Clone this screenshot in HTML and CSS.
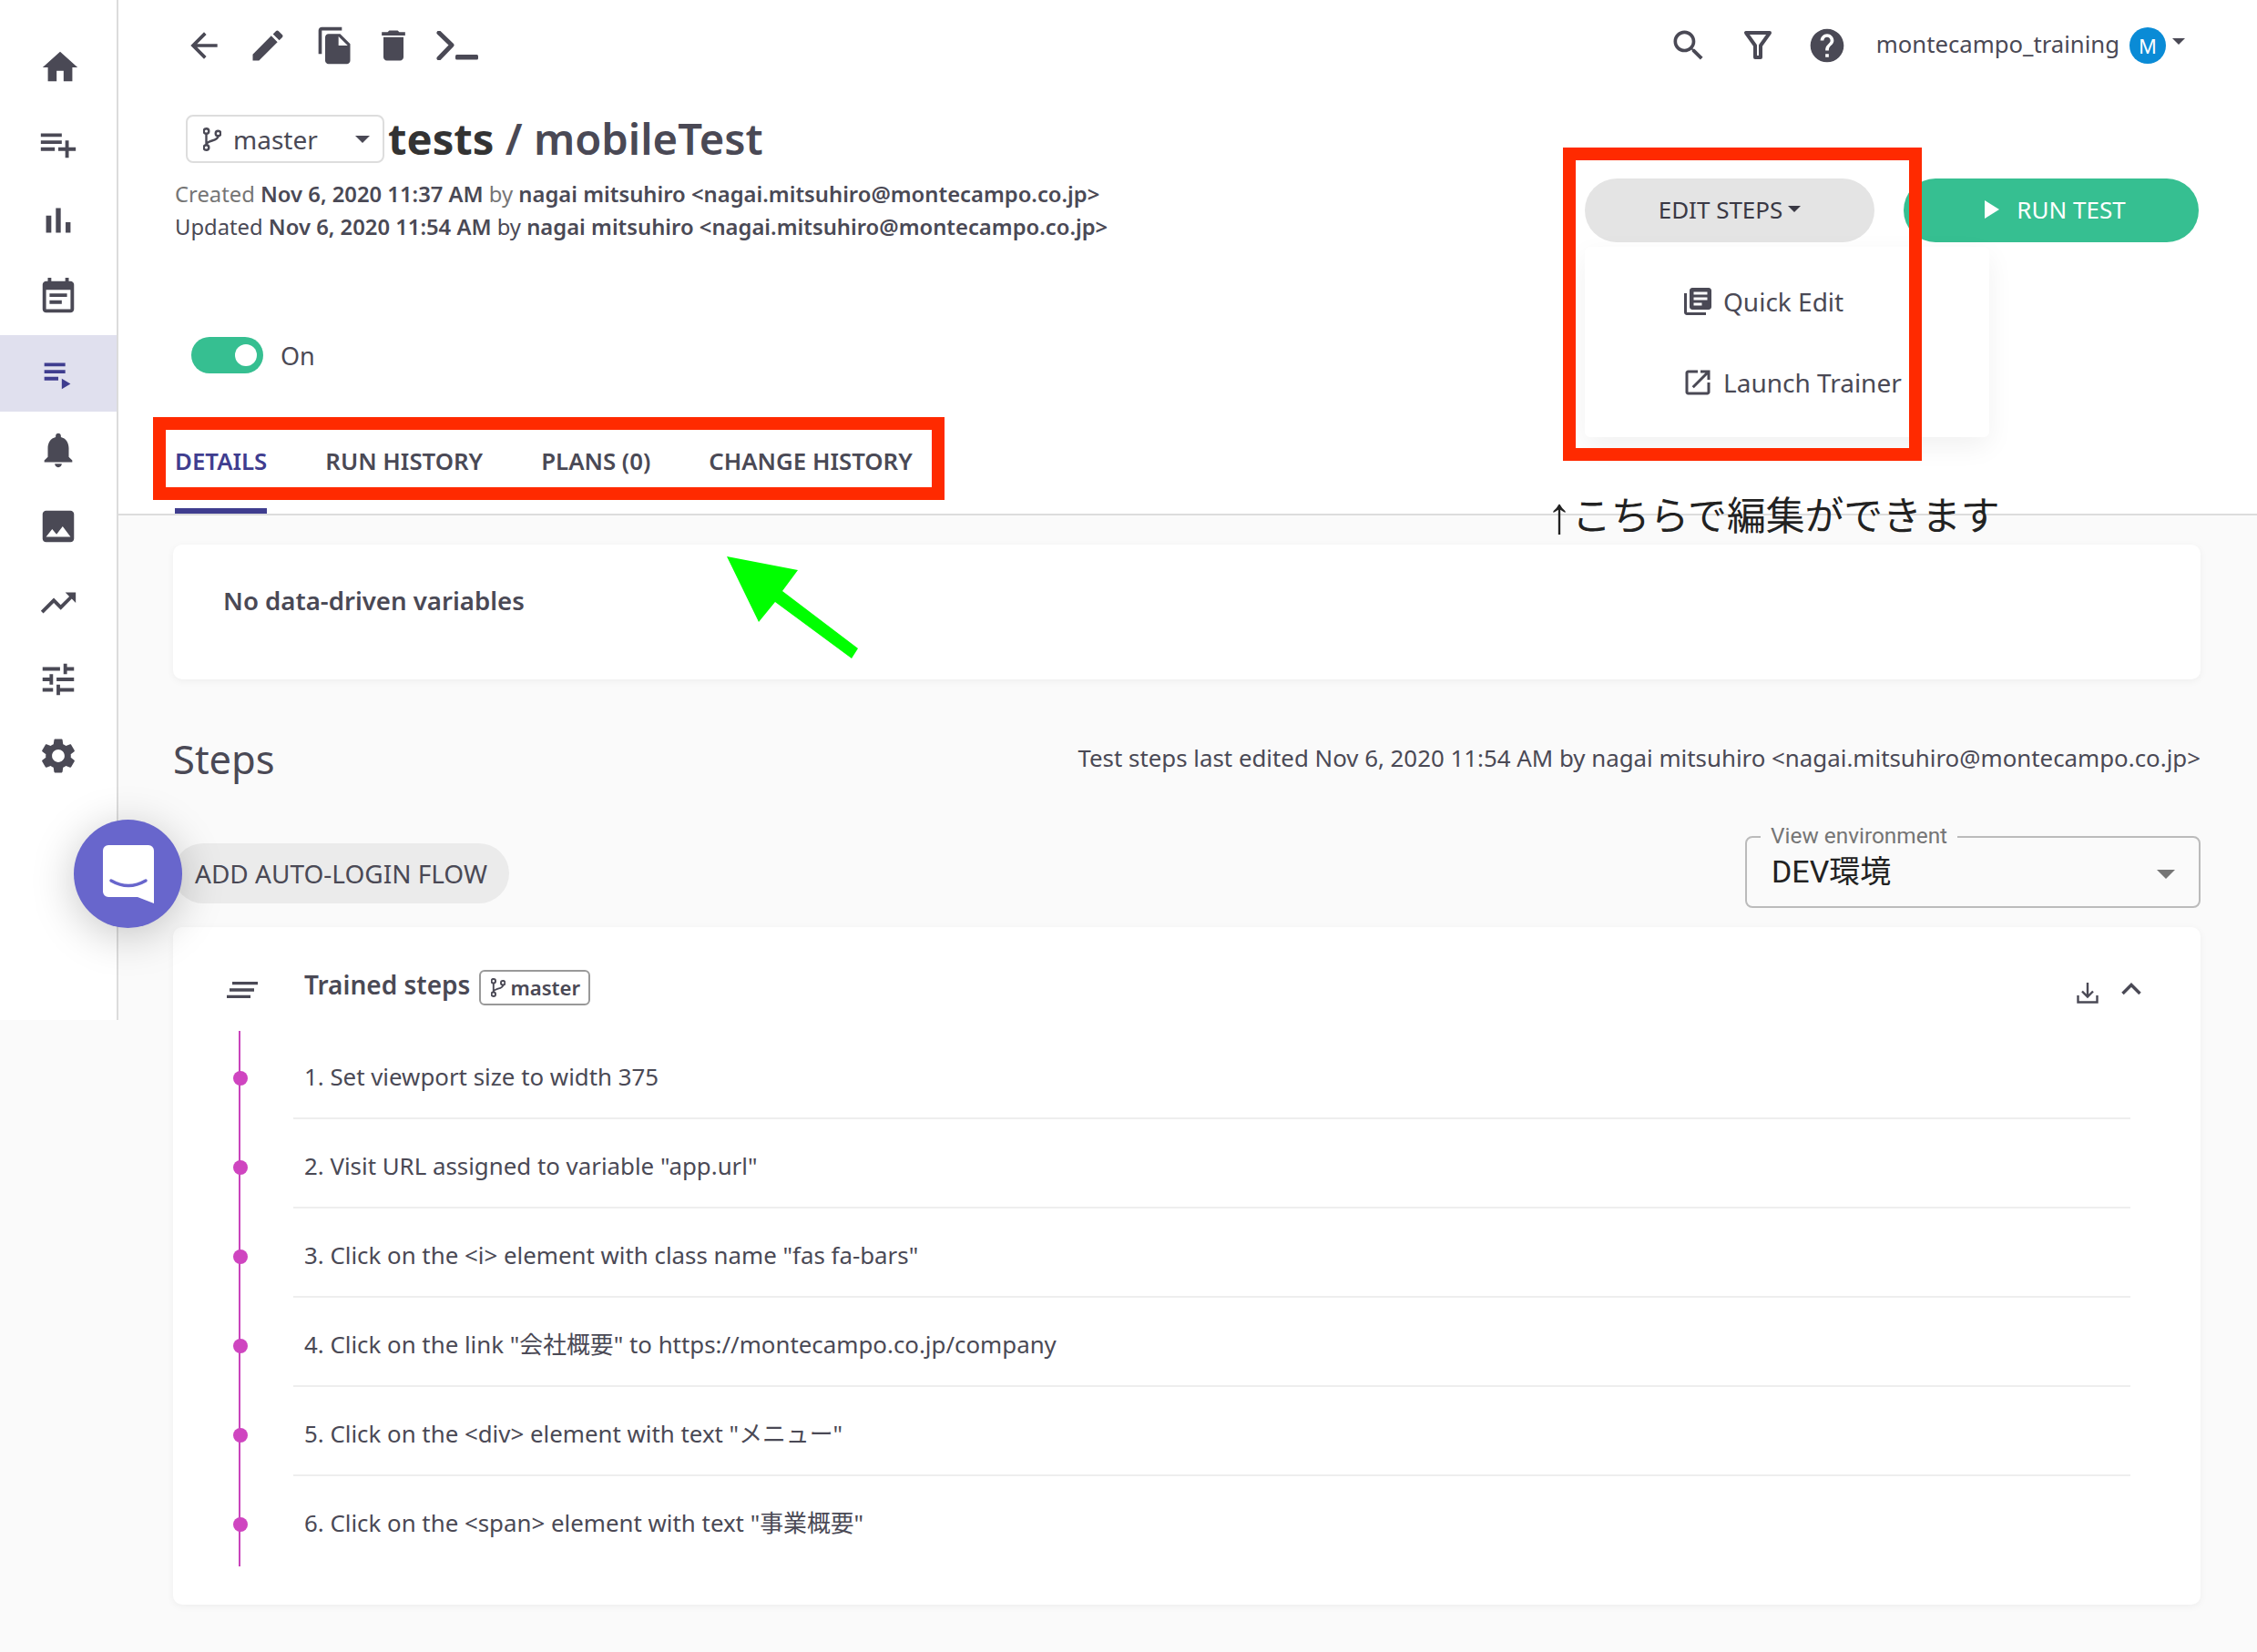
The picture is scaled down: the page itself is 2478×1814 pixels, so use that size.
FILE: index.html
```html
<!DOCTYPE html>
<html lang="en">
<head>
<meta charset="utf-8">
<title>tests / mobileTest</title>
<link rel="stylesheet" href="styles.css">
</head>
<body>
<div class="app">
  <nav class="sidebar">
    <a class="nav-item"><svg class="ico46 nudge" viewBox="0 0 24 24"><path d="M10 20v-6h4v6h5v-8h3L12 3 2 12h3v8z"/></svg></a>
    <a class="nav-item"><svg class="ico46" viewBox="0 0 24 24"><path d="M14 10H2v2h12v-2zm0-4H2v2h12V6zm4 8v-4h-2v4h-4v2h4v4h2v-4h4v-2h-4zM2 16h8v-2H2v2z"/></svg></a>
    <a class="nav-item"><svg class="ico46" viewBox="0 0 24 24"><path d="M5 9.2h3V19H5zM10.6 5h2.8v14h-2.8zm5.6 8H19v6h-2.8z"/></svg></a>
    <a class="nav-item"><svg class="ico46" viewBox="0 0 24 24"><path d="M17 10H7v2h10v-2zm2-7h-1V1h-2v2H8V1H6v2H5c-1.11 0-1.99.9-1.99 2L3 19c0 1.1.89 2 2 2h14c1.1 0 2-.9 2-2V5c0-1.1-.9-2-2-2zm0 16H5V8h14v11zm-5-5H7v2h7v-2z"/></svg></a>
    <a class="nav-item active"><svg class="ico46" viewBox="0 0 24 24"><path d="M4 6h12v2H4zm0 4h12v2H4zm0 4h8v2H4zm10 1v6l5-3z"/></svg></a>
    <a class="nav-item"><svg class="ico46" viewBox="0 0 24 24"><path d="M12 22c1.1 0 2-.9 2-2h-4c0 1.1.89 2 2 2zm6-6v-5c0-3.07-1.64-5.64-4.5-6.32V4c0-.83-.67-1.5-1.5-1.5s-1.5.67-1.5 1.5v.68C7.63 5.36 6 7.92 6 11v5l-2 2v1h16v-1l-2-2z"/></svg></a>
    <a class="nav-item"><svg class="ico46" viewBox="0 0 24 24"><path d="M21 19V5c0-1.1-.9-2-2-2H5c-1.1 0-2 .9-2 2v14c0 1.1.9 2 2 2h14c1.1 0 2-.9 2-2zM8.5 13.5l2.5 3.01L14.5 12l4.5 6H5l3.5-4.5z"/></svg></a>
    <a class="nav-item"><svg class="ico46" viewBox="0 0 24 24"><path d="M16 6l2.29 2.29-4.88 4.88-4-4L2 16.59 3.41 18l6-6 4 4 6.3-6.29L22 12V6z"/></svg></a>
    <a class="nav-item"><svg class="ico46" viewBox="0 0 24 24"><path d="M3 17v2h6v-2H3zM3 5v2h10V5H3zm10 16v-2h8v-2h-8v-2h-2v6h2zM7 9v2H3v2h4v2h2V9H7zm14 4v-2H11v2h10zm-6-4h2V7h4V5h-4V3h-2v6z"/></svg></a>
    <a class="nav-item"><svg class="ico46" viewBox="0 0 24 24"><path d="M19.14 12.94c.04-.3.06-.61.06-.94 0-.32-.02-.64-.07-.94l2.03-1.58c.18-.14.23-.41.12-.61l-1.92-3.32c-.12-.22-.37-.29-.59-.22l-2.39.96c-.5-.38-1.03-.7-1.62-.94l-.36-2.54c-.04-.24-.24-.41-.48-.41h-3.84c-.24 0-.43.17-.47.41l-.36 2.54c-.59.24-1.13.57-1.62.94l-2.39-.96c-.22-.08-.47 0-.59.22L2.74 8.87c-.12.21-.08.47.12.61l2.03 1.58c-.05.3-.09.63-.09.94s.02.64.07.94l-2.03 1.58c-.18.14-.23.41-.12.61l1.92 3.32c.12.22.37.29.59.22l2.39-.96c.5.38 1.03.7 1.62.94l.36 2.54c.05.24.24.41.48.41h3.84c.24 0 .44-.17.47-.41l.36-2.54c.59-.24 1.13-.56 1.62-.94l2.39.96c.22.08.47 0 .59-.22l1.92-3.32c.12-.22.07-.47-.12-.61l-2.01-1.58zM12 15.6c-1.98 0-3.6-1.62-3.6-3.6s1.62-3.6 3.6-3.6 3.6 1.62 3.6 3.6-1.62 3.6-3.6 3.6z"/></svg></a>
  </nav>

  <main class="main">
    <header class="header">
      <div class="topbar">
        <div class="toolbar">
          <svg class="ico44" viewBox="0 0 24 24"><path d="M20 11H7.83l5.59-5.59L12 4l-8 8 8 8 1.41-1.41L7.83 13H20v-2z"/></svg>
          <svg class="ico44" viewBox="0 0 24 24"><path d="M3 17.25V21h3.75L17.81 9.94l-3.75-3.75L3 17.25zM20.71 7.04c.39-.39.39-1.02 0-1.41l-2.34-2.34c-.39-.39-1.02-.39-1.41 0l-1.83 1.83 3.75 3.75 1.83-1.83z"/></svg>
          <svg class="ico44 copy" viewBox="0 0 24 24"><path d="M16 1H4c-1.1 0-2 .9-2 2v14h2V3h12V1zm-1 4l6 6v10c0 1.1-.9 2-2 2H7.99C6.89 23 6 22.1 6 21l.01-14c0-1.1.89-2 1.99-2h7zm-1 7h5.5L14 6.5V12z"/></svg>
          <svg class="ico44 trash" viewBox="0 0 24 24"><path d="M6 19c0 1.1.9 2 2 2h8c1.1 0 2-.9 2-2V7H6v12zM19 4h-3.5l-1-1h-5l-1 1H5v2h14V4z"/></svg>
          <svg class="term" viewBox="0 0 46 32"><path d="M3 2l14 13.5L3 30" fill="none" stroke="#4a4955" stroke-width="5" stroke-linecap="round" stroke-linejoin="round"/><rect x="21" y="26" width="25" height="5.5" rx="1.5"/></svg>
        </div>
        <div class="userbar">
          <svg class="ico44" viewBox="0 0 24 24"><path d="M15.5 14h-.79l-.28-.27C15.41 12.59 16 11.11 16 9.5 16 5.91 13.09 3 9.5 3S3 5.91 3 9.5 5.91 16 9.5 16c1.61 0 3.09-.59 4.23-1.57l.27.28v.79l5 4.99L20.49 19l-4.99-5zm-6 0C7.01 14 5 11.99 5 9.5S7.01 5 9.5 5 14 7.01 14 9.5 11.99 14 9.5 14z"/></svg>
          <svg class="ico44" viewBox="0 0 44 44"><path d="M9 8h26L25 22v13h-6V22z" fill="none" stroke="#4a4955" stroke-width="4" stroke-linejoin="round"/></svg>
          <svg class="ico44" viewBox="0 0 24 24"><path d="M12 2C6.48 2 2 6.48 2 12s4.48 10 10 10 10-4.48 10-10S17.52 2 12 2zm1 17h-2v-2h2v2zm2.07-7.75l-.9.92C13.45 12.9 13 13.5 13 15h-2v-.5c0-1.1.45-2.1 1.17-2.83l1.24-1.26c.37-.36.59-.86.59-1.41 0-1.1-.9-2-2-2s-2 .9-2 2H8c0-2.21 1.79-4 4-4s4 1.79 4 4c0 .88-.36 1.68-.93 2.25z"/></svg>
          <span class="username">montecampo_training</span>
          <span class="avatar">M</span>
          <span class="caret user-caret"></span>
        </div>
      </div>

      <div class="head-body">
        <div class="head-left">
          <div class="title-row">
            <div class="branch-select">
              <svg class="branch" viewBox="0 0 20 26"><circle cx="3.500" cy="4" r="2.800"/><circle cx="3.500" cy="22" r="2.800"/><circle cx="16.500" cy="6.500" r="2.800"/><path d="M3.500 7v12M16.500 9.500c0 6-13 4-13 9.500"/></svg>
              <span class="branch-name">master</span>
              <span class="caret caret-branch"></span>
            </div>
            <h1 class="title"><span class="title-dark">tests</span> / mobileTest</h1>
          </div>
          <div class="meta">
            <p class="meta-line"><span class="muted">Created</span> <b>Nov 6, 2020 11:37 AM</b> <span class="muted">by</span> <b>nagai mitsuhiro &lt;nagai.mitsuhiro@montecampo.co.jp&gt;</b></p>
            <p class="meta-line">Updated <b>Nov 6, 2020 11:54 AM</b> by <b>nagai mitsuhiro &lt;nagai.mitsuhiro@montecampo.co.jp&gt;</b></p>
          </div>
          <div class="toggle-row">
            <span class="toggle"><span class="knob"></span></span>
            <span class="toggle-label">On</span>
          </div>
          <div class="tabs">
            <a class="tab active">DETAILS</a>
            <a class="tab">RUN HISTORY</a>
            <a class="tab">PLANS (0)</a>
            <a class="tab">CHANGE HISTORY</a>
          </div>
        </div>
        <div class="actions">
          <div class="edit-wrap">
            <button class="btn btn-edit">EDIT STEPS<span class="caret caret-edit"></span></button>
            <div class="menu">
              <div class="menu-item"><svg class="ico36" viewBox="0 0 24 24"><path d="M4 6H2v14c0 1.1.9 2 2 2h14v-2H4V6zm16-4H8c-1.1 0-2 .9-2 2v12c0 1.1.9 2 2 2h12c1.1 0 2-.9 2-2V4c0-1.1-.9-2-2-2zm-1 9H9V9h10v2zm-4 4H9v-2h6v2zm4-8H9V5h10v2z"/></svg>Quick Edit</div>
              <div class="menu-item"><svg class="ico36" viewBox="0 0 24 24"><path d="M19 19H5V5h7V3H5c-1.11 0-2 .9-2 2v14c0 1.1.89 2 2 2h14c1.1 0 2-.9 2-2v-7h-2v7zM14 3v2h3.59l-9.83 9.83 1.41 1.41L19 6.41V10h2V3h-7z"/></svg>Launch Trainer</div>
            </div>
          </div>
          <button class="btn btn-run"><svg class="play" viewBox="0 0 18 24"><path d="M1 2l16 10L1 22z"/></svg>RUN TEST</button>
        </div>
      </div>
    </header>

    <section class="content">
      <div class="card card-vars">No data-driven variables</div>

      <div class="steps-head">
        <h2 class="steps-title">Steps</h2>
        <p class="steps-edited">Test steps last edited Nov 6, 2020 11:54 AM by nagai mitsuhiro &lt;nagai.mitsuhiro@montecampo.co.jp&gt;</p>
      </div>

      <div class="steps-tools">
        <button class="btn-login">ADD AUTO-LOGIN FLOW</button>
        <div class="env-select">
          <span class="env-label">View environment</span>
          <span class="env-value">DEV環境</span>
          <span class="env-caret"></span>
        </div>
      </div>

      <div class="card card-steps">
        <div class="steps-card-head">
          <svg class="lines" viewBox="0 0 34 18"><path d="M6 1.500h28M3 9h27M0 16.500h26" fill="none" stroke="#4a4955" stroke-width="3.500"/></svg>
          <span class="trained">Trained steps</span>
          <span class="chip"><svg class="branch small" viewBox="0 0 20 26"><circle cx="3.500" cy="4" r="2.800"/><circle cx="3.500" cy="22" r="2.800"/><circle cx="16.500" cy="6.500" r="2.800"/><path d="M3.500 7v12M16.500 9.500c0 6-13 4-13 9.500"/></svg>master</span>
          <span class="card-tools">
            <svg class="dl" viewBox="0 0 24 24"><path d="M12 1v15M6 10.500l6 6 6-6M1.500 15v7.500h21V15" fill="none" stroke="#4a4955" stroke-width="2.400"/></svg>
            <svg class="chev" viewBox="0 0 22 14"><path d="M1.500 12L11 2.500 20.500 12" fill="none" stroke="#4a4955" stroke-width="3.500"/></svg>
          </span>
        </div>
        <ol class="step-list">
          <li class="step">1. Set viewport size to width 375</li>
          <li class="step">2. Visit URL assigned to variable "app.url"</li>
          <li class="step">3. Click on the &lt;i&gt; element with class name "fas fa-bars"</li>
          <li class="step">4. Click on the link "会社概要" to https://montecampo.co.jp/company</li>
          <li class="step">5. Click on the &lt;div&gt; element with text "メニュー"</li>
          <li class="step">6. Click on the &lt;span&gt; element with text "事業概要"</li>
        </ol>
      </div>
    </section>
  </main>
</div>

<div class="mark mark-tabs"></div>
<div class="mark mark-edit"></div>
<p class="note"><span class="note-arrow">↑</span>こちらで編集ができます</p>
<svg class="green-arrow" viewBox="0 0 160 125"><polygon points="8,1 86,16 69,39 152,102 145,113 61,51 43,73"/></svg>
<div class="chat">
  <svg class="chat-icon" viewBox="0 0 56 64"><path d="M6 0h44a6 6 0 0 1 6 6v58l-18-7H6a6 6 0 0 1-6-6V6a6 6 0 0 1 6-6z" fill="#fff"/><path d="M9 39q19 11 38 0" fill="none" stroke="#6866cc" stroke-width="3.500" stroke-linecap="round"/></svg>
</div>
</body>
</html>
```
FILE: styles.css
```css
* { box-sizing: border-box; }
html, body { margin: 0; padding: 0; }
body {
  position: relative;
  width: 2478px;
  height: 1814px;
  overflow: hidden;
  background: #fafafa;
  color: #4a4955;
  font-family: "Noto Sans", "Noto Sans CJK JP", sans-serif;
  font-size: 26px;
}
svg { fill: #4a4955; flex: none; display: block; }
p, h1, h2, ol { margin: 0; padding: 0; }
button { font-family: inherit; border: 0; color: inherit; padding: 0; }

.app { display: flex; align-items: flex-start; }

/* sidebar */
.sidebar {
  flex: none;
  width: 130px;
  height: 1120px;
  padding-top: 32px;
  background: #fff;
  border-right: 2px solid #dcdcdc;
  position: relative;
  z-index: 1;
}
.nav-item { display: flex; align-items: center; justify-content: center; height: 84px; }
.nav-item.active { background: #e0e0ee; }
.nav-item.active svg { fill: #3f3d8f; }
.nudge { margin-left: 3px; }
.ico46 { width: 46px; height: 46px; }
.ico44 { width: 44px; height: 44px; }
.ico36 { width: 36px; height: 36px; }

/* header */
.main { flex: 1; min-width: 0; }
.header { height: 566px; background: #fff; border-bottom: 2px solid #dcdcdc; }
.topbar { display: flex; justify-content: space-between; align-items: center; height: 98px; padding: 2px 79px 0 72px; }
.toolbar { display: flex; align-items: center; gap: 26px; }
.copy { margin-left: 4px; }
.trash { margin-left: -6px; }
.term { width: 46px; height: 32px; margin-left: -1px; }
.userbar { display: flex; align-items: center; gap: 32px; }
.username { font-size: 25.7px; margin: -3px -21px 0 0; }
.avatar {
  width: 40px; height: 40px; border-radius: 50%;
  background: #0a8bd6; color: #fff; font-size: 22px;
  display: flex; align-items: center; justify-content: center;
}
.caret { width: 0; height: 0; border: 7px solid transparent; border-top-color: #4a4955; border-bottom-width: 0; }
.user-caret { margin: -10px 0 0 -25px; }
.caret-branch { border-width: 8px 8px 0; }

.head-body { display: flex; justify-content: space-between; }
.head-left { width: 1100px; position: relative; }
.title-row { display: flex; align-items: center; margin: 28px 0 0 74px; height: 53px; }
.branch-select {
  width: 218px; height: 53px;
  border: 2px solid #ddd; border-radius: 8px;
  display: flex; align-items: center; padding: 0 14px 0 17px;
}
.branch { width: 20px; height: 26px; fill: none; stroke: #4a4955; stroke-width: 2.4; }
.branch-name { font-size: 28px; margin-left: 13px; flex: 1; }
.title { font-size: 47.2px; font-weight: 600; margin-left: 4px; line-height: 53px; white-space: nowrap; }
.title-dark { color: #333; font-weight: 700; }
.meta { margin: 16px 0 0 62px; }
.meta-line { font-size: 23.8px; line-height: 36px; white-space: nowrap; }
.meta-line b { font-weight: 600; }
.muted { color: #757575; }
.toggle-row { display: flex; align-items: center; margin: 103px 0 0 80px; height: 40px; }
.toggle { width: 79px; height: 40px; border-radius: 20px; background: #36bf91; position: relative; display: block; }
.knob { position: absolute; right: 7px; top: 8px; width: 24px; height: 24px; border-radius: 50%; background: #fff; }
.toggle-label { margin-left: 19px; font-size: 27px; }
.tabs { display: flex; margin: 64px 0 0 30px; height: 90px; }
.tab {
  display: flex; align-items: center; height: 90px; padding: 0 32px 27px;
  font-size: 25.8px; font-weight: 600; position: relative;
}
.tab.active { color: #3f3d8f; }
.tab.active::after { content: ""; position: absolute; left: 32px; right: 32px; bottom: 0; height: 6px; background: #3f3d8f; }

/* actions */
.actions { display: flex; gap: 32px; padding: 98px 64px 0 0; align-items: flex-start; }
.edit-wrap { position: relative; }
.btn { height: 70px; width: 318px; border-radius: 35px; font-size: 26px; display: flex; align-items: center; justify-content: center; padding-bottom: 2px; }
.btn-edit { background: #e4e4e4; color: #3a3944; }
.caret-edit { margin-left: 6px; margin-top: -2px; border-top-color: #3a3944; }
.btn-run { width: 324px; background: #36bf91; color: #fff; padding-left: 8px; }
.play { width: 18px; height: 24px; fill: #fff; margin-right: 18px; }
.menu {
  position: absolute; left: 0; top: 75px; width: 444px; height: 209px;
  padding: 15px 0 0 106px; background: #fff; border-radius: 6px;
  box-shadow: 0 10px 30px rgba(0,0,0,.06);
  z-index: 2;
}
.menu-item { display: flex; align-items: center; gap: 10px; height: 89px; font-size: 28px; white-space: nowrap; }

/* content */
.content { padding: 32px 62px 0 60px; }
.card { background: #fff; border-radius: 10px; box-shadow: 0 2px 8px rgba(0,0,0,.05); }
.card-vars { height: 148px; padding: 41px 55px; font-size: 27.6px; font-weight: 600; line-height: 40px; }
.steps-head { display: flex; justify-content: space-between; align-items: center; height: 60px; margin-top: 60px; }
.steps-title { font-size: 43.500px; font-weight: 400; margin-top: -6px; }
.steps-edited { font-size: 25.85px; margin-top: -9px; }
.steps-tools { display: flex; justify-content: space-between; align-items: flex-start; margin-top: 52px; height: 79px; }
.btn-login { height: 66px; margin-top: 8px; padding: 0 24px; border-radius: 33px; background: #ebebeb; font-size: 28px; }
.env-select { position: relative; width: 500px; height: 79px; border: 2px solid #bbb; border-radius: 8px; font-family: Roboto, "Noto Sans CJK JP", sans-serif; display: flex; align-items: center; padding: 0 0 7px 27px; }
.env-label { position: absolute; left: 15px; top: -16px; padding: 0 11px; background: #fafafa; color: #757575; font-size: 24.4px; line-height: 28px; }
.env-value { font-size: 34px; color: #222; }
.env-caret { position: absolute; right: 26px; top: 35px; width: 0; height: 0; border: 10px solid transparent; border-top-color: #757575; border-bottom-width: 0; }

.card-steps { margin-top: 21px; height: 744px; }
.steps-card-head { display: flex; align-items: center; height: 113px; padding: 20px 65px 0 59px; }
.lines { width: 34px; height: 18px; margin-top: 4px; }
.trained { font-size: 28px; font-weight: 600; margin: -8px 0 0 51px; }
.chip {
  display: flex; align-items: center; gap: 5px;
  height: 39px; padding: 0 9px 0 11px; margin: 0 0 0 10px;
  border: 2px solid #999; border-radius: 6px;
  font-size: 22.2px; font-weight: 600;
}
.branch.small { width: 16px; height: 21px; }
.card-tools { margin-left: auto; display: flex; gap: 25px; align-items: flex-start; height: 24px; margin-top: 10px; }
.dl { width: 24px; height: 24px; }
.chev { width: 22px; height: 14px; margin-top: 1px; }
.step-list { list-style: none; margin: 0 77px 0 132px; position: relative; }
.step-list::before { content: ""; position: absolute; left: -60px; top: 1px; bottom: -1px; width: 2px; background: #c944bb; }
.step { position: relative; height: 98px; padding: 29px 0 0 12px; line-height: 44px; font-size: 25.85px; border-bottom: 2px solid #eee; }
.step:last-child { border-bottom: 0; }
.step::before { content: ""; position: absolute; left: -66px; top: 45px; width: 16px; height: 16px; border-radius: 50%; background: #cf45c0; }

/* annotations laid over the screenshot */
.mark { position: absolute; border: 14px solid #ff2a00; z-index: 5; }
.mark-tabs { left: 168px; top: 458px; width: 869px; height: 91px; }
.mark-edit { left: 1716px; top: 162px; width: 394px; height: 344px; }
.note { position: absolute; left: 1698px; top: 538px; font-size: 42.8px; line-height: 56px; color: #222; z-index: 5; white-space: nowrap; }
.note-arrow { font-family: "Liberation Sans", sans-serif; font-size: 56px; line-height: 0; font-weight: 700; display: inline-block; width: 28px; vertical-align: -3px; }
.green-arrow { position: absolute; left: 790px; top: 610px; width: 160px; height: 125px; fill: #00ff00; z-index: 5; }
.chat {
  position: absolute; left: 81px; top: 900px; width: 119px; height: 119px; border-radius: 50%;
  background: #6866cc; box-shadow: 0 8px 48px rgba(0,0,0,.22); z-index: 6;
  display: flex; align-items: center; justify-content: center;
}
.chat-icon { width: 56px; height: 64px; }
```
